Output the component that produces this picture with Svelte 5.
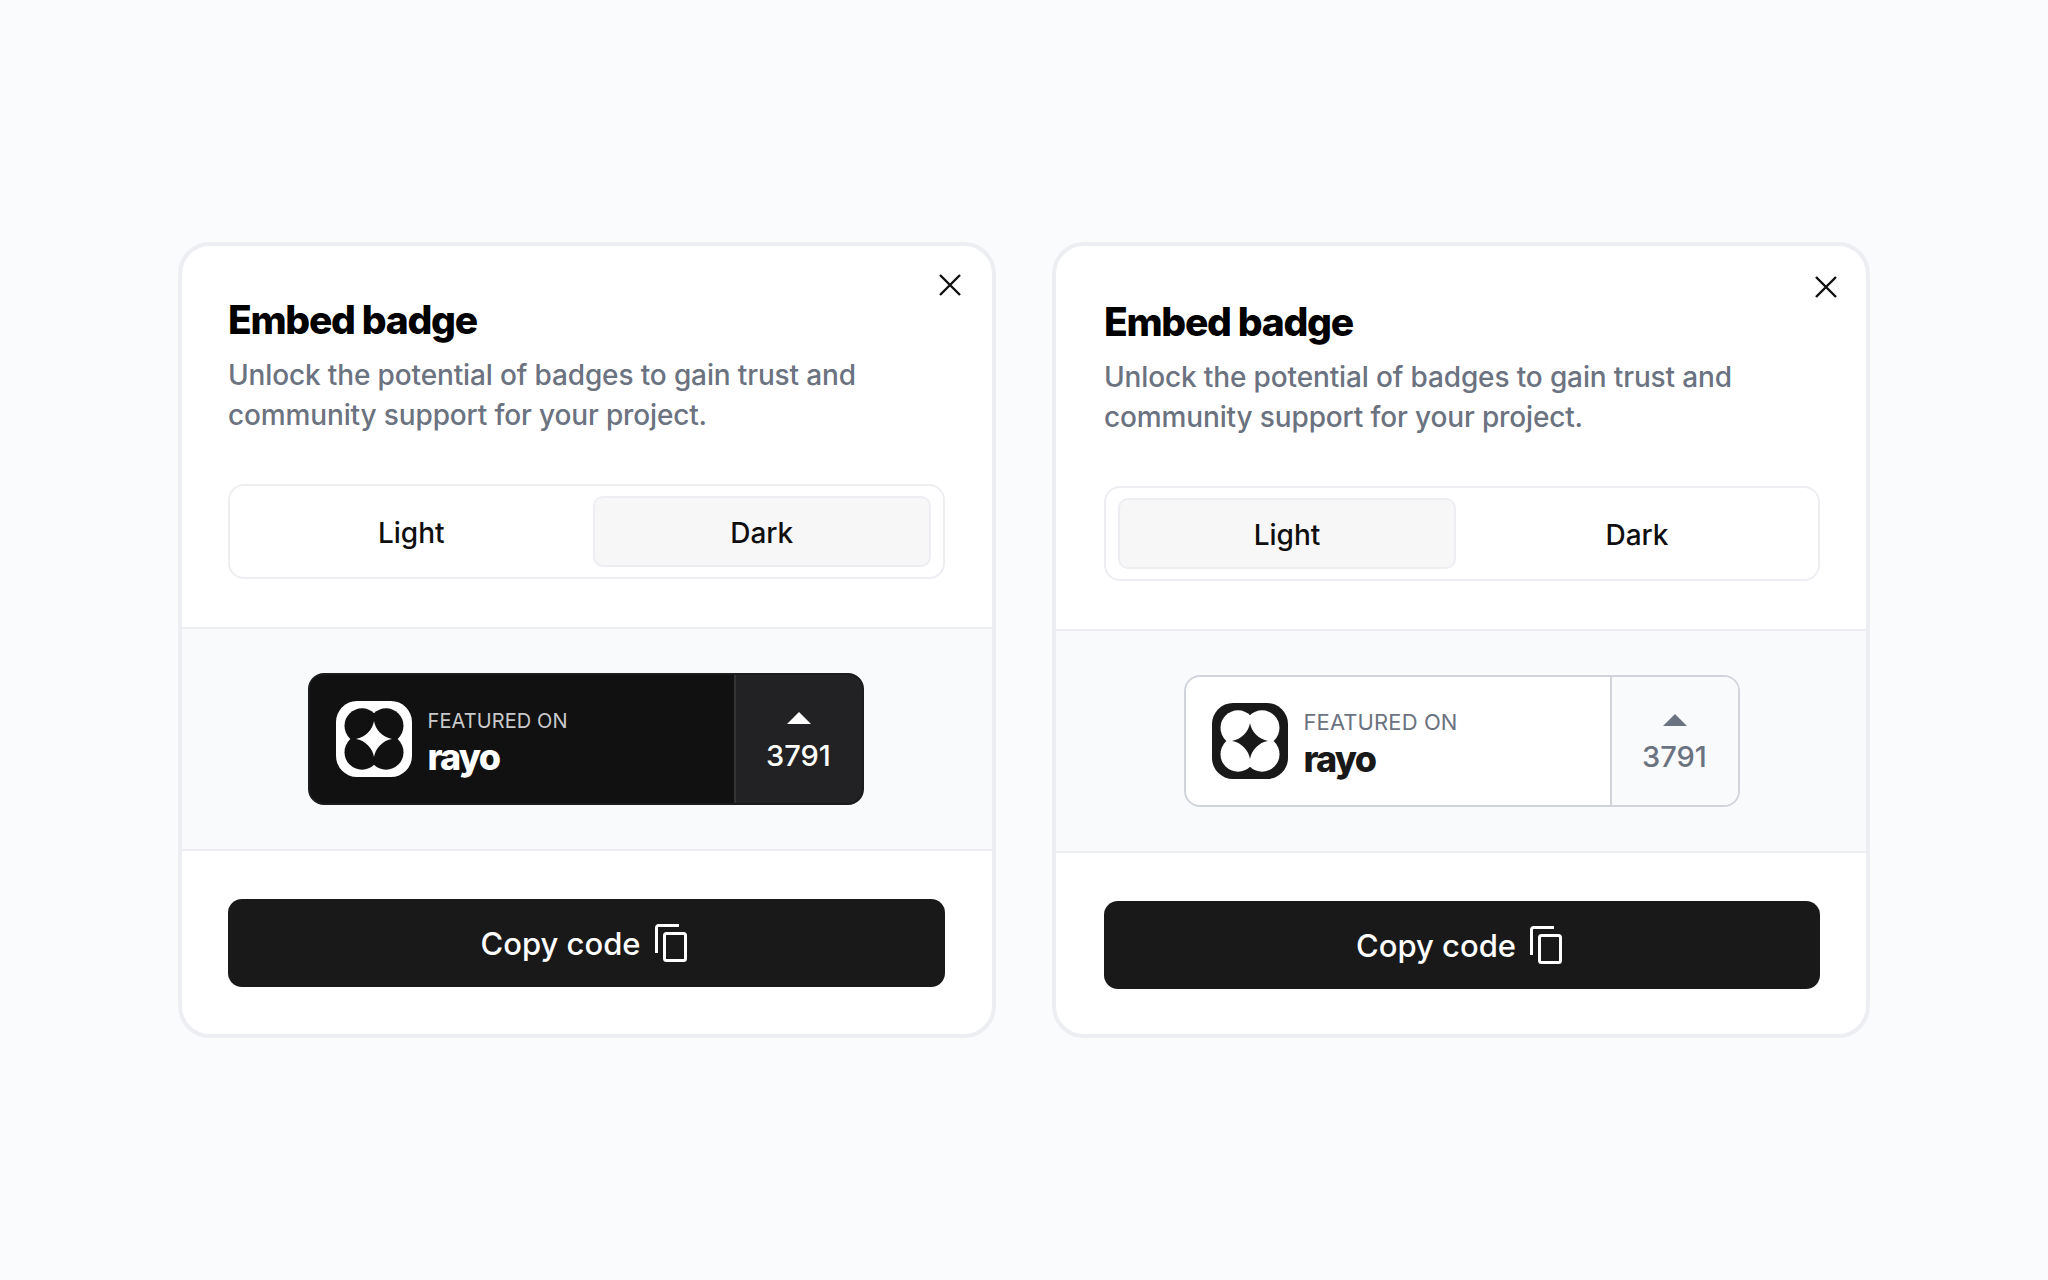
<script lang="ts">
  const cards = [
    { theme: 'dark', active: 'Dark' },
    { theme: 'light', active: 'Light' }
  ];
  const options = ['Light', 'Dark'];
</script>

<main class="page">
  {#each cards as card}
    <section class="card {card.theme}">
      <button class="close" aria-label="Close">
        <svg viewBox="0 0 22 22" width="22" height="22" fill="none" stroke="currentColor" stroke-width="2.4">
          <path d="M1 1 21 21M21 1 1 21" />
        </svg>
      </button>

      <div class="head">
        <h2>Embed badge</h2>
        <p>Unlock the potential of badges to gain trust and community support for your project.</p>
        <div class="segment">
          {#each options as option}
            <div class="option" class:active={option === card.active}>{option}</div>
          {/each}
        </div>
      </div>

      <div class="preview">
        <div class="badge">
          <div class="brand">
            <svg class="logo" viewBox="0 0 76 76" width="76" height="76">
              <rect class="logo-bg" width="76" height="76" rx="21" />
              <circle class="logo-fg" cx="26" cy="24.8" r="17.5" />
              <circle class="logo-fg" cx="50" cy="24.8" r="17.5" />
              <circle class="logo-fg" cx="26" cy="51.2" r="17.5" />
              <circle class="logo-fg" cx="50" cy="51.2" r="17.5" />
              <path class="logo-bg" d="M38 20A22 22 0 0 0 56 38 22 22 0 0 0 38 56 22 22 0 0 0 20 38 22 22 0 0 0 38 20Z" />
            </svg>
            <div class="brand-text">
              <span class="featured">FEATURED ON</span>
              <span class="name">rayo</span>
            </div>
          </div>
          <div class="votes">
            <svg viewBox="0 0 24 12" width="24" height="12">
              <path d="M12 0 24 12H0Z" fill="currentColor" />
            </svg>
            <span>3791</span>
          </div>
        </div>
      </div>

      <div class="foot">
        <button class="copy">
          Copy code
          <svg viewBox="0 0 32 38" width="32" height="38" fill="none" stroke="currentColor" stroke-width="3">
            <path d="M1.5 29V3.5a2 2 0 0 1 2-2H24" />
            <rect x="9.5" y="9.5" width="21" height="27" rx="2" />
          </svg>
        </button>
      </div>
    </section>
  {/each}
</main>

<style>
  :global(body) {
    margin: 0;
    background: #fafbfd;
  }

  .page {
    display: flex;
    gap: 56px;
    height: 1280px;
    box-sizing: border-box;
    padding: 242px 0 0 178px;
    font-family: Inter, "Liberation Sans", sans-serif;
    color: #0f0f10;
  }

  .card {
    position: relative;
    width: 818px;
    height: 796px;
    box-sizing: border-box;
    background: #fff;
    border: 4px solid #eceef2;
    border-radius: 32px;
    overflow: hidden;
  }

  .close {
    position: absolute;
    top: 28px;
    right: 31px;
    display: flex;
    padding: 0;
    border: 0;
    background: none;
    color: #0f0f10;
  }

  .light .close {
    top: 30px;
    right: 29px;
  }

  .head {
    padding: 50px 47px 48px 46px;
  }

  .light .head {
    padding: 52px 46px 48px 48px;
  }

  h2 {
    margin: 0;
    font-size: 39px;
    line-height: 48px;
    font-weight: 800;
    letter-spacing: -1.3px;
    color: #000;
  }

  p {
    margin: 11px 0 0;
    font-size: 28px;
    line-height: 40px;
    font-weight: 500;
    letter-spacing: -0.14px;
    color: #6b7280;
    width: 680px;
  }

  .segment {
    display: grid;
    grid-template-columns: 1fr 1fr;
    gap: 12px;
    margin-top: 49px;
    padding: 10px 12px;
    border: 2px solid #eceef2;
    border-radius: 16px;
    height: 95px;
    box-sizing: border-box;
  }

  .option {
    display: flex;
    align-items: center;
    justify-content: center;
    padding-top: 2px;
    font-size: 28px;
    font-weight: 500;
    border: 2px solid transparent;
    border-radius: 10px;
  }

  .option.active {
    background: #f7f7f8;
    border-color: #eceef2;
  }

  .preview {
    display: flex;
    justify-content: center;
    align-items: center;
    height: 224px;
    box-sizing: border-box;
    background: #f9fafc;
    border-top: 2px solid #eceef2;
    border-bottom: 2px solid #eceef2;
  }

  .badge {
    display: flex;
    width: 556px;
    height: 132px;
    margin-bottom: 1px;
    box-sizing: border-box;
    border-radius: 16px;
    overflow: hidden;
  }

  .dark .badge {
    margin-right: 3px;
    background: #111112;
    border: 2px solid #1c1c1e;
  }

  .light .badge {
    margin-left: 1px;
    background: #fff;
    border: 2px solid #d1d5db;
  }

  .brand {
    flex: 1;
    display: flex;
    align-items: center;
    gap: 16px;
    padding-left: 26px;
  }

  .logo-bg {
    fill: #fff;
  }

  .logo-fg {
    fill: #111112;
  }

  .light .logo-bg {
    fill: #191919;
  }

  .light .logo-fg {
    fill: #fff;
  }

  .brand-text {
    display: flex;
    flex-direction: column;
    padding-top: 6px;
  }

  .featured {
    font-size: 20px;
    line-height: 30px;
    letter-spacing: 0.1px;
    color: #c9c9cb;
  }

  .light .featured {
    font-size: 22px;
    margin-top: -1px;
    color: #6b7280;
  }

  .name {
    font-size: 36px;
    line-height: 42px;
    font-weight: 800;
    letter-spacing: -1.8px;
    color: #fff;
  }

  .light .name {
    margin-top: 1px;
    color: #191919;
  }

  .votes {
    width: 128px;
    display: flex;
    flex-direction: column;
    align-items: center;
    gap: 14px;
    font-size: 29px;
    font-weight: 500;
    padding-top: 37px;
    box-sizing: border-box;
  }

  .votes svg {
    display: block;
  }

  .dark .votes {
    background: #222224;
    border-left: 2px solid #333336;
    color: #fff;
  }

  .light .votes {
    gap: 13px;
    background: #f9fafc;
    border-left: 2px solid #d1d5db;
    color: #6b7280;
  }

  .foot {
    padding: 48px 47px 0 46px;
  }

  .light .foot {
    padding: 48px 46px 0 48px;
  }

  .copy {
    display: flex;
    align-items: center;
    justify-content: center;
    gap: 14px;
    width: 100%;
    height: 88px;
    padding: 0 6px 0 0;
    border: 0;
    border-radius: 14px;
    background: #191919;
    color: #fff;
    font-family: inherit;
    font-size: 31px;
    font-weight: 500;
  }
</style>
